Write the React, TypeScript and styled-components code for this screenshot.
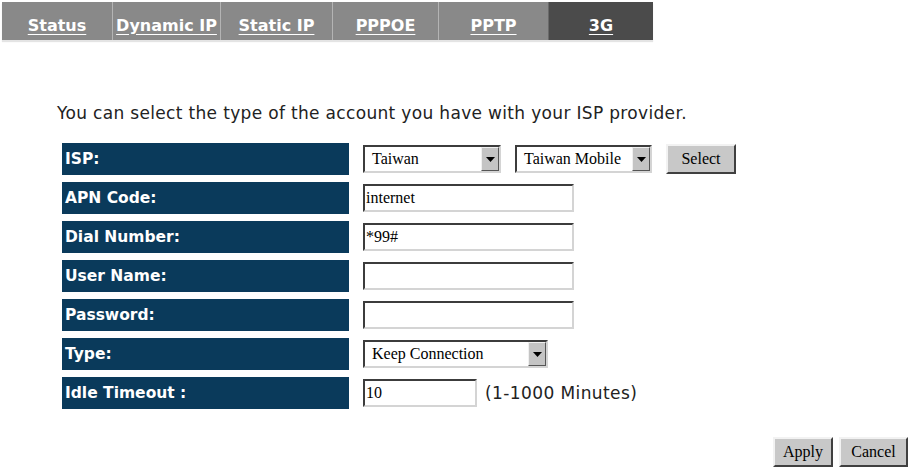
import React from "react";
import styled, { createGlobalStyle } from "styled-components";

const GlobalStyle = createGlobalStyle`
  body {
    margin: 0;
    background: #ffffff;
    font-family: "DejaVu Sans", Verdana, sans-serif;
  }
`;

const tabs = [
  { name: "Status", width: 110 },
  { name: "Dynamic IP", width: 108 },
  { name: "Static IP", width: 112 },
  { name: "PPPOE", width: 106 },
  { name: "PPTP", width: 110 },
  { name: "3G", width: 105, active: true },
];

function Dropdown({ value, width }: { value: string; width: number }) {
  return (
    <SelectBox style={{ width }}>
      <SelectText>{value}</SelectText>
      <ArrowButton>
        <svg width="9" height="5" viewBox="0 0 9 5">
          <path d="M0 0 H9 L4.5 5 Z" fill="#000" />
        </svg>
      </ArrowButton>
    </SelectBox>
  );
}

function App() {
  return (
    <Page>
      <GlobalStyle />
      <TabBar>
        {tabs.map((tab, i) => (
          <Tab key={tab.name} $width={tab.width} $active={!!tab.active} $first={i === 0}>
            <TabLink>{tab.name}</TabLink>
          </Tab>
        ))}
      </TabBar>

      <Intro>You can select the type of the account you have with your ISP provider.</Intro>

      <FormTable>
        <Row>
          <Label>ISP:</Label>
          <Field>
            <Dropdown value="Taiwan" width={138} />
            <Dropdown value="Taiwan Mobile" width={137} />
            <Button $width={70}>Select</Button>
          </Field>
        </Row>
        <Row>
          <Label>APN Code:</Label>
          <Field>
            <TextInput $width={211} defaultValue="internet" />
          </Field>
        </Row>
        <Row>
          <Label>Dial Number:</Label>
          <Field>
            <TextInput $width={211} defaultValue="*99#" />
          </Field>
        </Row>
        <Row>
          <Label>User Name:</Label>
          <Field>
            <TextInput $width={211} defaultValue="" />
          </Field>
        </Row>
        <Row>
          <Label>Password:</Label>
          <Field>
            <TextInput $width={211} type="password" defaultValue="" />
          </Field>
        </Row>
        <Row>
          <Label>Type:</Label>
          <Field>
            <Dropdown value="Keep Connection" width={185} />
          </Field>
        </Row>
        <Row>
          <Label>Idle Timeout :</Label>
          <Field>
            <TextInput $width={114} defaultValue="10" />
            <Hint>(1-1000 Minutes)</Hint>
          </Field>
        </Row>
      </FormTable>

      <Actions>
        <Button $width={60}>Apply</Button>
        <Button $width={69}>Cancel</Button>
      </Actions>
    </Page>
  );
}

const Page = styled.div`
  width: 915px;
  height: 471px;
  box-sizing: border-box;
  padding: 2px 7px 0 2px;
  overflow: hidden;
`;

const TabBar = styled.div`
  display: flex;
  width: 651px;
  height: 38px;
  box-shadow: 0 2px 1px #e4e4e4;
`;

const Tab = styled.div<{ $width: number; $active: boolean; $first: boolean }>`
  width: ${(p) => p.$width}px;
  box-sizing: border-box;
  display: flex;
  align-items: center;
  justify-content: center;
  background: ${(p) => (p.$active ? "#4b4b4b" : "#898989")};
  border-left: ${(p) => (p.$first ? "none" : p.$active ? "1px solid #6a6a6a" : "1px solid #b4b4b4")};
`;

const TabLink = styled.a`
  color: #ffffff;
  font-weight: bold;
  font-size: 16px;
  text-decoration: underline;
  text-underline-offset: 3px;
  padding-top: 8px;
`;

const Intro = styled.div`
  margin: 63px 0 0 55px;
  font-size: 17px;
  letter-spacing: 0.33px;
  line-height: 20px;
  color: #222;
`;

const FormTable = styled.div`
  display: flex;
  flex-direction: column;
  gap: 7px;
  margin: 20px 0 0 60px;
`;

const Row = styled.div`
  display: flex;
  height: 32px;
`;

const Label = styled.div`
  width: 287px;
  flex: none;
  box-sizing: border-box;
  padding-left: 3px;
  display: flex;
  align-items: center;
  background: #0a3a5b;
  color: #ffffff;
  font-weight: bold;
  font-size: 15.5px;
`;

const Field = styled.div`
  display: flex;
  align-items: center;
  gap: 14px;
  padding-left: 14px;
`;

const insetBorder = `
  box-sizing: border-box;
  height: 28px;
  border-top: 2px solid #3c3c3c;
  border-left: 2px solid #3c3c3c;
  border-bottom: 2px solid #d4d4d4;
  border-right: 2px solid #d4d4d4;
  background: #ffffff;
`;

const TextInput = styled.input<{ $width: number }>`
  ${insetBorder}
  width: ${(p) => p.$width}px;
  padding: 0 1px;
  font-family: "Liberation Serif", "Times New Roman", serif;
  font-size: 16px;
  color: #000;
  outline: none;
`;

const SelectBox = styled.div`
  ${insetBorder}
  display: flex;
  align-items: stretch;
`;

const SelectText = styled.span`
  flex: 1;
  display: flex;
  align-items: center;
  padding-left: 7px;
  font-family: "Liberation Serif", "Times New Roman", serif;
  font-size: 16px;
  color: #000;
  white-space: nowrap;
  overflow: hidden;
`;

const ArrowButton = styled.span`
  width: 18px;
  flex: none;
  box-sizing: border-box;
  display: flex;
  align-items: center;
  justify-content: center;
  background: #c4c4c4;
  border-top: 1px solid #f0f0f0;
  border-left: 1px solid #f0f0f0;
  border-bottom: 1px solid #555;
  border-right: 1px solid #555;
`;

const Hint = styled.span`
  margin-left: -6px;
  font-size: 17px;
  letter-spacing: 0.4px;
  color: #222;
`;

const Button = styled.button<{ $width: number }>`
  width: ${(p) => p.$width}px;
  height: 30px;
  box-sizing: border-box;
  padding: 0;
  background: #c8c8c8;
  border-top: 2px solid #f2f2f2;
  border-left: 2px solid #f2f2f2;
  border-bottom: 2px solid #404040;
  border-right: 2px solid #404040;
  font-family: "Liberation Serif", "Times New Roman", serif;
  font-size: 16px;
  color: #000;
`;

const Actions = styled.div`
  display: flex;
  justify-content: flex-end;
  gap: 6px;
  margin-top: 28px;
`;

export default App;
